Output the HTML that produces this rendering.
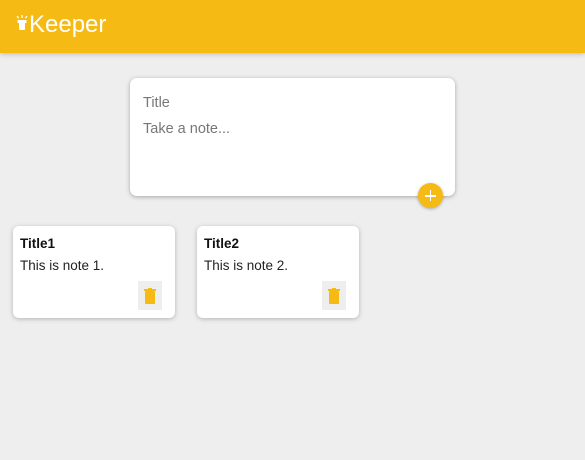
<!DOCTYPE html>
<html><head><meta charset="utf-8"><style>
*{box-sizing:border-box;margin:0;padding:0}
body{width:585px;height:460px;background:#eeeeee;font-family:"Liberation Sans",sans-serif;overflow:hidden;position:relative}
header{height:53px;background:#f5ba13;box-shadow:0 0 6px rgba(0,0,0,.3);position:relative}
header h1{position:absolute;left:16px;top:11px;color:#fff;font-weight:400;font-size:24px;font-family:"Liberation Sans",sans-serif;letter-spacing:0}
.create{position:absolute;left:130px;top:78px;width:325px;height:118px;background:#fff;border-radius:7px;box-shadow:0 1px 5px rgba(0,0,0,.3)}
.create .t{position:absolute;left:13px;top:17px;font-size:14.5px;color:#777}
.create .n{position:absolute;left:13px;top:43px;font-size:14.5px;color:#777}
.add{position:absolute;left:418px;top:183px;width:25px;height:25px;border-radius:50%;background:#f5ba13;box-shadow:0 1px 3px rgba(0,0,0,.3)}
.add:before{content:"";position:absolute;left:7px;top:12px;width:11px;height:1.5px;background:#fff}
.add:after{content:"";position:absolute;left:11.8px;top:7px;width:1.5px;height:11px;background:#fff}
.note{position:absolute;top:226px;width:162px;height:92px;background:#fff;border-radius:6px;box-shadow:0 1px 5px rgba(0,0,0,.25)}
.note h2{position:absolute;left:7px;top:10px;font-size:13.5px;font-weight:700;color:#111}
.note p{position:absolute;left:7px;top:32px;font-size:13.5px;color:#222}
.del{position:absolute;left:125px;top:55px;width:24px;height:29px;background:#eee}
.del svg{position:absolute;left:6px;top:7px}
</style></head><body>
<header><h1><svg width="12" height="18" viewBox="0 0 12 18" style="vertical-align:-1px;margin-right:1px"><rect x="3" y="6" width="6" height="9" rx="1" fill="#fff"/><rect x="1.5" y="5" width="9" height="3" fill="#fff"/><rect x="5.3" y="0" width="1.4" height="3" fill="#fff"/><rect x="1" y="1" width="1.4" height="2.5" fill="#fff" transform="rotate(-35 1.7 2)"/><rect x="9.6" y="1" width="1.4" height="2.5" fill="#fff" transform="rotate(35 10.3 2)"/></svg>Keeper</h1></header>
<div class="create"><div class="t">Title</div><div class="n">Take a note...</div></div>
<div class="add"></div>
<div class="note" style="left:13px"><h2>Title1</h2><p>This is note 1.</p><div class="del"><svg width="12" height="16" viewBox="0 0 12 16"><rect x="1" y="3" width="10" height="13" rx="1" fill="#f5ba13"/><rect x="0" y="1" width="12" height="2" fill="#f5ba13"/><rect x="4" y="0" width="4" height="2" fill="#f5ba13"/></svg></div></div>
<div class="note" style="left:197px"><h2>Title2</h2><p>This is note 2.</p><div class="del"><svg width="12" height="16" viewBox="0 0 12 16"><rect x="1" y="3" width="10" height="13" rx="1" fill="#f5ba13"/><rect x="0" y="1" width="12" height="2" fill="#f5ba13"/><rect x="4" y="0" width="4" height="2" fill="#f5ba13"/></svg></div></div>
</body></html>
